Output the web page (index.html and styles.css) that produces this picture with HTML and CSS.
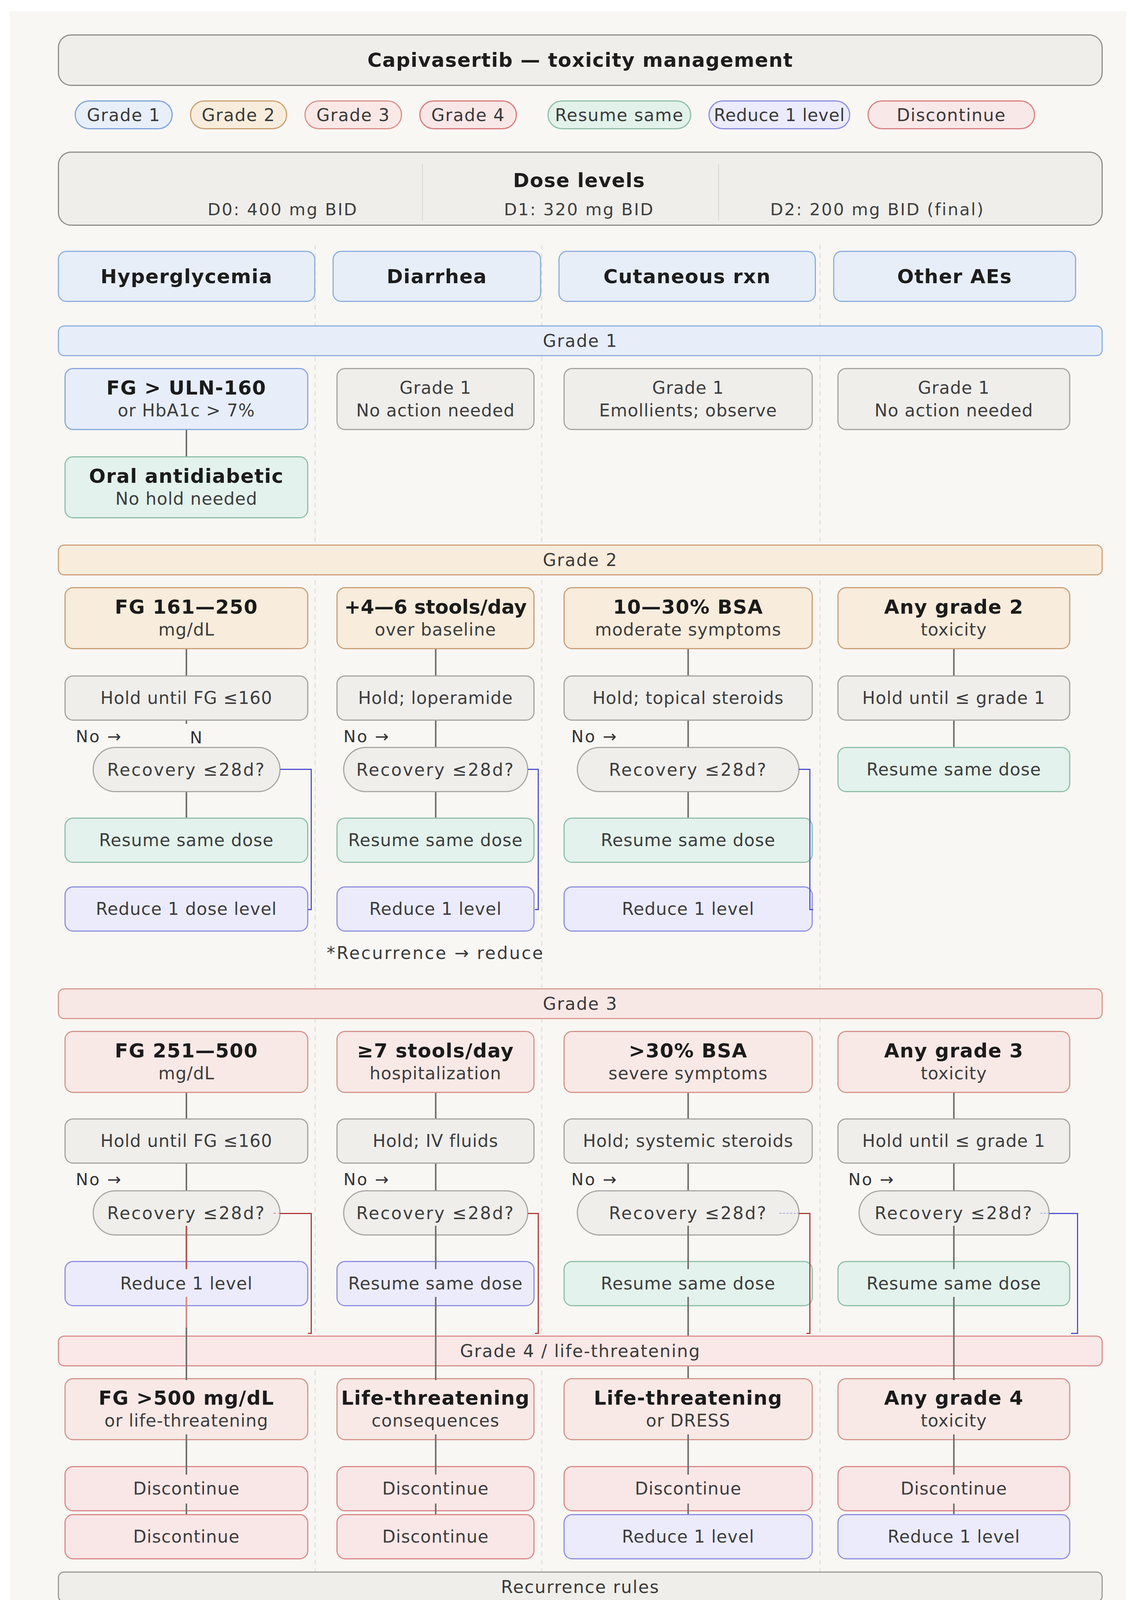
FILE: index.html
```html
<!DOCTYPE html>
<html lang="en">
<head>
<meta charset="utf-8">
<title>Capivasertib — toxicity management</title>
<link rel="stylesheet" href="styles.css">
</head>
<body>
<div class="page">
  <header class="title-box">Capivasertib — toxicity management</header>

  <div class="legend">
    <span class="chip chip-g1">Grade 1</span>
    <span class="chip chip-g2">Grade 2</span>
    <span class="chip chip-g3">Grade 3</span>
    <span class="chip chip-g4">Grade 4</span>
    <span class="chip chip-resume">Resume same</span>
    <span class="chip chip-reduce">Reduce 1 level</span>
    <span class="chip chip-stop">Discontinue</span>
  </div>

  <div class="dose-box">
    <div class="dose-cell dose-first"><span class="dose-val">D0: 400 mg BID</span></div>
    <div class="dose-cell dose-mid"><div class="dose-title">Dose levels</div><span class="dose-val">D1: 320 mg BID</span></div>
    <div class="dose-cell dose-last"><span class="dose-val">D2: 200 mg BID (final)</span></div>
  </div>

  <div class="board">
    <div class="cols headers">
      <div class="hdr">Hyperglycemia</div>
      <div class="hdr">Diarrhea</div>
      <div class="hdr">Cutaneous rxn</div>
      <div class="hdr">Other AEs</div>
    </div>

    <!-- Grade 1 -->
    <div class="band band-g1 first">Grade 1</div>
    <div class="cols sec">
      <div class="col c1">
        <div class="node two blue"><b>FG &gt; ULN-160</b><span>or HbA1c &gt; 7%</span></div>
        <div class="link h67"></div>
        <div class="node two green"><b>Oral antidiabetic</b><span>No hold needed</span></div>
      </div>
      <div class="col c2">
        <div class="node two gray"><span>Grade 1</span><span>No action needed</span></div>
      </div>
      <div class="col c3">
        <div class="node two gray"><span>Grade 1</span><span>Emollients; observe</span></div>
      </div>
      <div class="col c4">
        <div class="node two gray"><span>Grade 1</span><span>No action needed</span></div>
      </div>
    </div>

    <!-- Grade 2 -->
    <div class="band band-g2 after-g1">Grade 2</div>
    <div class="cols sec">
      <div class="col c1">
        <div class="node two tan"><b>FG 161—250</b><span>mg/dL</span></div>
        <div class="link h67"></div>
        <div class="node gray">Hold until FG ≤160</div>
        <div class="link h67 stub"><span class="no">No →</span><span class="n-mark">N</span></div>
        <div class="pill">Recovery ≤28d?</div>
        <div class="link h65"></div>
        <div class="node green">Resume same dose</div>
        <div class="link h60 none"></div>
        <div class="node purple">Reduce 1 dose level</div>
        <div class="bracket g2 purple-line"></div>
      </div>
      <div class="col c2">
        <div class="node two tan"><b class="tight">+4—6 stools/day</b><span>over baseline</span></div>
        <div class="link h67"></div>
        <div class="node gray">Hold; loperamide</div>
        <div class="link h67"><span class="no">No →</span></div>
        <div class="pill">Recovery ≤28d?</div>
        <div class="link h65"></div>
        <div class="node green">Resume same dose</div>
        <div class="link h60 none"></div>
        <div class="node purple">Reduce 1 level</div>
        <div class="note">*Recurrence → reduce</div>
        <div class="bracket g2 purple-line"></div>
      </div>
      <div class="col c3">
        <div class="node two tan"><b>10—30% BSA</b><span>moderate symptoms</span></div>
        <div class="link h67"></div>
        <div class="node gray">Hold; topical steroids</div>
        <div class="link h67"><span class="no">No →</span></div>
        <div class="pill">Recovery ≤28d?</div>
        <div class="link h65"></div>
        <div class="node green">Resume same dose</div>
        <div class="link h60 none"></div>
        <div class="node purple">Reduce 1 level</div>
        <div class="bracket g2 purple-line hook-right"></div>
      </div>
      <div class="col c4">
        <div class="node two tan"><b>Any grade 2</b><span>toxicity</span></div>
        <div class="link h67"></div>
        <div class="node gray">Hold until ≤ grade 1</div>
        <div class="link h67"></div>
        <div class="node green">Resume same dose</div>
      </div>
    </div>

    <!-- Grade 3 -->
    <div class="band band-g3 after-g2">Grade 3</div>
    <div class="cols sec">
      <div class="col c1">
        <div class="node two salmon"><b>FG 251—500</b><span>mg/dL</span></div>
        <div class="link h65"></div>
        <div class="node gray">Hold until FG ≤160</div>
        <div class="link h68"><span class="no">No →</span></div>
        <div class="pill">Recovery ≤28d?<i class="dash red-dash"></i></div>
        <div class="link h65 over redline"></div>
        <div class="node purple drop drop-red">Reduce 1 level</div>
        <div class="bracket g3 red-line"></div>
      </div>
      <div class="col c2">
        <div class="node two salmon"><b>≥7 stools/day</b><span>hospitalization</span></div>
        <div class="link h65"></div>
        <div class="node gray">Hold; IV fluids</div>
        <div class="link h68"><span class="no">No →</span></div>
        <div class="pill">Recovery ≤28d?</div>
        <div class="link h65 over"></div>
        <div class="node purple drop">Resume same dose</div>
        <div class="bracket g3 red-line"></div>
      </div>
      <div class="col c3">
        <div class="node two salmon"><b>&gt;30% BSA</b><span>severe symptoms</span></div>
        <div class="link h65"></div>
        <div class="node gray">Hold; systemic steroids</div>
        <div class="link h68"><span class="no">No →</span></div>
        <div class="pill">Recovery ≤28d?<i class="dash blue-dash"></i></div>
        <div class="link h65 over"></div>
        <div class="node green drop drop-under">Resume same dose</div>
        <div class="bracket g3 red-line"></div>
      </div>
      <div class="col c4">
        <div class="node two salmon"><b>Any grade 3</b><span>toxicity</span></div>
        <div class="link h65"></div>
        <div class="node gray">Hold until ≤ grade 1</div>
        <div class="link h68"><span class="no">No →</span></div>
        <div class="pill">Recovery ≤28d?<i class="dash blue-dash short"></i></div>
        <div class="link h65 over"></div>
        <div class="node green drop">Resume same dose</div>
        <div class="bracket g3 purple-line long-hook"></div>
      </div>
    </div>

    <!-- Grade 4 -->
    <div class="band band-g4 after-g3">Grade 4 / life-threatening</div>
    <div class="cols sec">
      <div class="col c1">
        <div class="node two salmon"><b>FG &gt;500 mg/dL</b><span>or life-threatening</span></div>
        <div class="link h66 into"></div>
        <div class="node stop">Discontinue</div>
        <div class="link h7 tick"></div>
        <div class="node stop">Discontinue</div>
      </div>
      <div class="col c2">
        <div class="node two salmon"><b>Life-threatening</b><span>consequences</span></div>
        <div class="link h66 into"></div>
        <div class="node stop">Discontinue</div>
        <div class="link h7 tick"></div>
        <div class="node stop">Discontinue</div>
      </div>
      <div class="col c3">
        <div class="node two salmon"><b>Life-threatening</b><span>or DRESS</span></div>
        <div class="link h66 into"></div>
        <div class="node stop">Discontinue</div>
        <div class="link h7 tick"></div>
        <div class="node purple">Reduce 1 level</div>
      </div>
      <div class="col c4">
        <div class="node two salmon"><b>Any grade 4</b><span>toxicity</span></div>
        <div class="link h66 into"></div>
        <div class="node stop">Discontinue</div>
        <div class="link h7 tick"></div>
        <div class="node purple">Reduce 1 level</div>
      </div>
    </div>

    <!-- Recurrence -->
    <div class="band band-rec after-g4">Recurrence rules</div>
    <div class="cols sec">
      <div class="col c1"><div class="node two purple"><b>G2 recurrence</b><span>Reduce 1 level</span></div></div>
      <div class="col c2"><div class="node two purple"><b>G2 recurrence</b><span>Reduce 1 level</span></div></div>
      <div class="col c3"><div class="node two stop"><b>G3 recurrence</b><span>Discontinue</span></div></div>
      <div class="col c4"><div class="node two purple"><b>G3 recurrence</b><span>Reduce 1 level</span></div></div>
    </div>

    <section class="notes">
      <h2>Key notes</h2>
      <p>Max 2 dose reductions total — if unable to tolerate 200 mg BID, discontinue permanently</p>
      <p>Strong CYP3A inhibitors unavoidable: start at or reduce to 320 mg BID</p>
      <p>Monitor FBG before tx, wks 1–2 (days 3–4), wks 4/6/8, then monthly; HbA1c at cycles 4/7/10</p>
    </section>
  </div>
  <div class="page-knob"></div>
</div>
</body>
</html>
```

FILE: styles.css
```css
* { box-sizing: border-box; }

html {
  margin: 0;
  padding: 0;
  height: 4782px;
  overflow: hidden;
  background: #ffffff;
}

body {
  margin: 0;
  padding: 0;
  height: 4782px;
  overflow: hidden;
  background: #ffffff;
  font-family: "DejaVu Sans", Inter, "Noto Sans", sans-serif;
  color: #3d3d3d;
  letter-spacing: 0.07em;
}

.page {
  position: relative;
  margin: 29px 20px 0 25px;
  width: 2857px;
  height: 4726px;
  padding: 59px 60px 0 123px;
  background: #f8f7f4;
  overflow: hidden;
}

.page-knob {
  position: absolute;
  left: 1399px;
  bottom: 0;
  width: 120px;
  height: 19px;
  border-radius: 60px 60px 0 0 / 19px 19px 0 0;
  background: #ffffff;
  border: 2px solid #e6e5e2;
  border-bottom: none;
}

/* Title */
.title-box {
  height: 132px;
  border: 3px solid #8f8e8b;
  border-radius: 34px;
  background: #efeeea;
  display: flex;
  align-items: center;
  justify-content: center;
  font-size: 50px;
  font-weight: 700;
  letter-spacing: 0.03em;
  color: #1d1d1d;
}

/* Legend */
.legend {
  margin-top: 37px;
  padding-left: 43px;
  display: flex;
  gap: 44px;
  height: 74px;
}

.chip {
  height: 74px;
  border: 3px solid;
  border-radius: 37px;
  display: flex;
  align-items: center;
  justify-content: center;
  font-size: 44px;
  letter-spacing: 0.04em;
  color: #3a3a3a;
  white-space: nowrap;
  flex: none;
}

.chip-g1 { width: 251px; background: #e8eff9; border-color: #7fa3d8; }
.chip-g2 { width: 249px; background: #f8eddc; border-color: #c9a070; }
.chip-g3 { width: 250px; background: #f9e8e6; border-color: #d9908a; }
.chip-g4 { width: 250px; background: #f9e7e7; border-color: #d77a7a; }
.chip-resume { width: 368px; margin-left: 34px; background: #e2f2ea; border-color: #8fbfa8; }
.chip-reduce { width: 363px; background: #ebebfc; border-color: #8c8ce0; letter-spacing: 0.02em; }
.chip-stop { width: 429px; background: #f9e8e8; border-color: #d98080; }

/* Dose levels */
.dose-box {
  margin-top: 57px;
  height: 190px;
  border: 3px solid #8f8e8b;
  border-radius: 34px;
  background: #efeeea;
  padding-top: 30px;
  display: grid;
  grid-template-columns: 929px 760px 979px;
  align-items: start;
}

.dose-cell {
  height: 145px;
  display: flex;
  flex-direction: column;
  justify-content: flex-end;
}

.dose-val {
  display: block;
  line-height: 60px;
  font-size: 43px;
  letter-spacing: 0.07em;
  color: #3f3f3f;
  white-space: nowrap;
}

.dose-first { text-align: right; padding-right: 164px; }
.dose-mid {
  text-align: center;
  padding-left: 44px;
  padding-top: 11px;
  border-left: 2px solid #dad8d4;
  border-right: 2px solid #dad8d4;
  justify-content: space-between;
}
.dose-last { text-align: left; padding-left: 131px; }

.dose-title {
  line-height: 60px;
  font-size: 50px;
  font-weight: 700;
  letter-spacing: 0.03em;
  color: #1d1d1d;
}

/* Board */
.board {
  position: relative;
  margin-top: 49px;
  padding-top: 15px;
  padding-bottom: 30px;
  background-image:
    repeating-linear-gradient(to bottom, #e3e1dd 0 12px, transparent 12px 22px),
    repeating-linear-gradient(to bottom, #e3e1dd 0 12px, transparent 12px 22px),
    repeating-linear-gradient(to bottom, #e3e1dd 0 12px, transparent 12px 22px);
  background-size: 3px 100%, 3px 100%, 3px 100%;
  background-position: 657px 0, 1237px 0, 1949px 0;
  background-repeat: no-repeat;
}

.cols {
  display: grid;
  grid-template-columns: 659px 534px 659px 622px;
  column-gap: 44px;
  align-items: start;
}

.hdr {
  height: 131px;
  border: 3px solid #8eaedc;
  border-radius: 22px;
  background: #e7eef8;
  display: flex;
  align-items: center;
  justify-content: center;
  font-size: 50px;
  font-weight: 700;
  letter-spacing: 0.03em;
  color: #1d1d1d;
}

/* Bands */
.band {
  position: relative;
  z-index: 1;
  height: 79px;
  border: 3px solid;
  border-radius: 16px;
  display: flex;
  align-items: center;
  justify-content: center;
  font-size: 44px;
  letter-spacing: 0.05em;
  color: #3a3a3a;
}

.band.first { margin-top: 60px; }
.band.after-g1 { margin-top: 67px; }
.band.after-g2 { margin-top: 65px; }
.band.after-g3 { margin-top: 75px; }
.band.after-g4 { margin-top: 31px; }

.band-g1 { background: #e7eef9; border-color: #8fb0e0; }
.band-g2 { background: #f8ecdc; border-color: #cfa27a; }
.band-g3 { background: #f8e8e5; border-color: #d99a90; }
.band-g4 { background: #f9e8e7; border-color: #d98f8c; }
.band-rec { background: #efeeea; border-color: #9c9b98; }

.sec { margin-top: 30px; }

/* Columns */
.col {
  position: relative;
  display: flex;
  flex-direction: column;
}

.c1 { --ml: 17px; --w: 624px; --pw: 481px; --no: 46px; }
.c2 { --ml: 10px; --w: 507px; --pw: 474px; --no: 28px; }
.c3 { --ml: 13px; --w: 638px; --pw: 570px; --no: 33px; }
.c4 { --ml: 11px; --w: 596px; --pw: 489px; --no: 39px; }

/* Nodes */
.node {
  margin-left: var(--ml);
  width: var(--w);
  height: 116px;
  border: 3px solid;
  border-radius: 22px;
  display: flex;
  flex-direction: column;
  align-items: center;
  justify-content: center;
  font-size: 44px;
  line-height: 58px;
  color: #3d3d3d;
  white-space: nowrap;
  flex: none;
}

.node.two { height: 159px; }

.node b {
  font-weight: 700;
  font-size: 50px;
  letter-spacing: 0.03em;
  color: #1b1b1b;
}

.node b.tight { letter-spacing: 0; }

.gray   { background: #efeeeb; border-color: #a5a4a1; }
.blue   { background: #e7eef9; border-color: #88a8dc; }
.green  { background: #e3f2ec; border-color: #8fc0aa; }
.tan    { background: #f8ecdc; border-color: #caa077; }
.salmon { background: #f8e9e6; border-color: #d4958b; }
.stop   { background: #f9e7e7; border-color: #d98a88; }
.purple { background: #ebebfb; border-color: #8f8fe0; }

.pill {
  position: relative;
  margin-left: calc(var(--ml) + (var(--w) - var(--pw)) / 2);
  width: var(--pw);
  height: 116px;
  border: 3px solid #a8a7a4;
  border-radius: 58px;
  background: #efeeeb;
  display: flex;
  align-items: center;
  justify-content: center;
  font-size: 44px;
  letter-spacing: 0.07em;
  color: #3d3d3d;
  white-space: nowrap;
  flex: none;
}

.dash {
  position: absolute;
  top: 50%;
  right: -3px;
  width: 52px;
  height: 0;
  border-top: 2px dashed #a9a9e6;
}
.dash.short { width: 24px; }
.red-dash { width: 18px; border-top-color: #d08080; }

/* Links */
.link {
  position: relative;
  flex: none;
}

.link::before {
  content: "";
  position: absolute;
  z-index: 2;
  left: calc(var(--ml) + var(--w) / 2 - 2px);
  width: 4px;
  top: 0;
  bottom: 0;
  background: #727170;
}

.h7  { height: 7px; }
.h60 { height: 60px; }
.h65 { height: 65px; }
.h66 { height: 66px; }
.h67 { height: 67px; }
.h68 { height: 68px; }

.link.none::before { display: none; }
.link.stub::before { bottom: auto; height: 8px; }
.link.over::before { top: -25px; bottom: -21px; }
.link.redline::before { background: #b95050; }
.link.into::before { top: -15px; bottom: -22px; }
.link.tick::before { top: -20px; }

.no {
  position: absolute;
  left: var(--no);
  top: 16px;
  line-height: 50px;
  font-size: 42px;
  letter-spacing: 0.08em;
  color: #333333;
  white-space: nowrap;
}

.n-mark {
  position: absolute;
  left: 338px;
  top: 19px;
  line-height: 50px;
  font-size: 42px;
  color: #333333;
}

/* Lines that continue from grade 3 into grade 4 */
.drop { position: relative; }
.drop::after {
  content: "";
  position: absolute;
  z-index: 3;
  left: calc(var(--w) / 2 - 5px);
  top: calc(100% - 21px);
  width: 4px;
  height: 213px;
  background: #727170;
}
.drop-red::after {
  background: linear-gradient(#d58a8a 0 79px, #727170 79px);
}
.drop-under::after { z-index: 0; }

/* Note */
.note {
  margin-top: 30px;
  margin-left: var(--ml);
  width: var(--w);
  display: flex;
  justify-content: center;
  line-height: 50px;
  font-size: 44px;
  letter-spacing: 0.08em;
  color: #3a3a3a;
  white-space: nowrap;
}

/* Return brackets */
.bracket {
  position: absolute;
  z-index: 2;
  border-top: 3px solid currentColor;
  border-right: 3px solid currentColor;
}

.bracket::after {
  content: "";
  position: absolute;
  right: -3px;
  bottom: -3px;
  width: 10px;
  border-bottom: 3px solid currentColor;
}

.bracket.hook-right::after { right: -10px; }
.bracket.long-hook::after { width: 18px; }

.purple-line { color: #5252d2; }
.red-line { color: #b03a3a; }

.bracket.g2 { top: 465px; height: 359px; }
.bracket.g3 { top: 466px; height: 307px; }

.c1 .bracket { left: 569px; width: 81px; }
.c2 .bracket { left: 500px; width: 28px; }
.c3 .bracket { left: 615px; width: 30px; }
.c4 .bracket { left: 553px; width: 74px; }

/* Key notes */
.notes {
  margin-top: 81px;
  height: 350px;
  border: 3px solid #8f8e8b;
  border-radius: 34px;
  background: #efeeea;
  padding-top: 45px;
  text-align: center;
}

.notes h2 {
  margin: 0 0 14px;
  line-height: 70px;
  font-size: 50px;
  font-weight: 700;
  letter-spacing: 0.03em;
  color: #1d1d1d;
}

.notes p {
  margin: 0;
  line-height: 72px;
  font-size: 44px;
  letter-spacing: 0.02em;
  color: #3a3a3a;
  white-space: nowrap;
}
```
